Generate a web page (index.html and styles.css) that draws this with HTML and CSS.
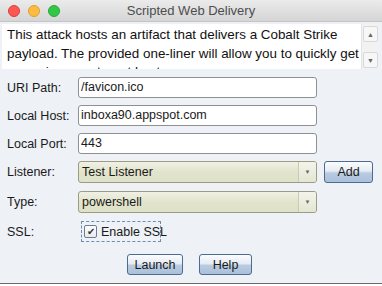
FILE: index.html
```html
<!DOCTYPE html>
<html lang="en">
<head>
  <meta charset="UTF-8">
  <title>Scripted Web Delivery</title>
  <link rel="stylesheet" href="styles.css">
</head>
<body>
  <div class="window">
    <div class="titlebar">
      <div class="lights">
        <span class="light red"></span>
        <span class="light yellow"></span>
        <span class="light green"></span>
      </div>
      <div class="title">Scripted Web Delivery</div>
    </div>
    <div class="desc">
      <p>This attack hosts an artifact that delivers a Cobalt Strike payload. The provided one-liner will allow you to quickly get a session on a target host.</p>
      <div class="scrollbar">
        <span class="arrow up">&#9650;</span>
        <span class="arrow down">&#9660;</span>
      </div>
    </div>
    <div class="form">
      <div class="row">
        <label>URI Path:</label>
        <div class="field">/favicon.ico</div>
      </div>
      <div class="row">
        <label>Local Host:</label>
        <div class="field">inboxa90.appspot.com</div>
      </div>
      <div class="row">
        <label>Local Port:</label>
        <div class="field">443</div>
      </div>
      <div class="row combo-row">
        <label>Listener:</label>
        <div class="combo">Test Listener<span class="drop">&#9660;</span></div>
        <button class="button add">Add</button>
      </div>
      <div class="row combo-row">
        <label>Type:</label>
        <div class="combo">powershell<span class="drop">&#9660;</span></div>
      </div>
      <div class="row check-row">
        <label>SSL:</label>
        <div class="check"><span class="box">&#10004;</span>Enable SSL</div>
      </div>
    </div>
    <div class="actions">
      <button class="button launch">Launch</button>
      <button class="button help">Help</button>
    </div>
  </div>
</body>
</html>
```

FILE: styles.css
```css
body {
  margin: 0;
  background: #fff;
  font-family: 'Liberation Sans', sans-serif;
  color: #1a1a1a;
}
.window {
  width: 382px;
  height: 284px;
  background: #eef1f6;
  border-bottom: 1px solid #6a6a6a;
  box-sizing: border-box;
  overflow: hidden;
}
.titlebar {
  height: 22px;
  background: linear-gradient(#ebebeb, #d5d5d5);
  border-bottom: 1px solid #c4c4c4;
  box-sizing: border-box;
  display: flex;
  align-items: center;
  position: relative;
}
.lights {
  display: flex;
  gap: 8px;
  padding-left: 8px;
}
.light {
  width: 12px;
  height: 12px;
  border-radius: 50%;
  box-sizing: border-box;
}
.red { background: #fc5753; border: 0.5px solid #df3d3a; }
.yellow { background: #fdbc40; border: 0.5px solid #de9f34; }
.green { background: #33c748; border: 0.5px solid #27aa35; }
.title {
  position: absolute;
  left: 0;
  right: 0;
  text-align: center;
  font-size: 13px;
  color: #4d4d4d;
}
.desc {
  margin: 2px 3px 0 2px;
  height: 45px;
  background: #fff;
  display: flex;
  overflow: hidden;
}
.desc p {
  flex: 1;
  margin: 0;
  padding: 2px 0 0 5px;
  font-size: 13.4px;
  line-height: 18.5px;
  color: #111;
}
.scrollbar {
  width: 17px;
  background: #f2f2f2;
  border-left: 1px solid #e4e4e4;
  display: flex;
  flex-direction: column;
  justify-content: space-between;
  padding: 2px 0 1px;
}
.arrow {
  height: 14px;
  margin: 0 1px;
  border: 1px solid #d8d8d8;
  border-radius: 2px;
  background: #f7f7f7;
  color: #666;
  font-size: 7px;
  display: flex;
  align-items: center;
  justify-content: center;
}
.form {
  padding: 8px 0 0 7px;
}
.row {
  display: flex;
  align-items: center;
  height: 21px;
  margin-bottom: 7px;
}
.row label {
  width: 71px;
  font-size: 12.5px;
}
.field {
  width: 239px;
  height: 21px;
  box-sizing: border-box;
  border: 1px solid #8f9091;
  border-radius: 3px;
  background: #fff;
  font-size: 12.5px;
  line-height: 19px;
  padding-left: 2px;
}
.combo-row {
  height: 22px;
  margin-bottom: 8px;
}
.combo {
  width: 239px;
  height: 22px;
  box-sizing: border-box;
  border: 1px solid #9a9c86;
  border-radius: 3px;
  background: linear-gradient(#f0f1e3, #e1e4cc 50%, #dfe2c8);
  font-size: 12.5px;
  line-height: 20px;
  padding-left: 3px;
  display: flex;
  justify-content: space-between;
}
.drop {
  width: 17px;
  border-left: 1px solid #c9cbb4;
  background: linear-gradient(#f4f4ea, #e4e6d2);
  color: #666;
  font-size: 6px;
  text-align: center;
  border-radius: 0 2px 2px 0;
}
.button {
  height: 22px;
  box-sizing: border-box;
  border: 1px solid #4e6a8f;
  border-radius: 3px;
  background: linear-gradient(#fbfcfd, #e5ecf4 45%, #b9cbe0 55%, #a9c0dc);
  font-family: 'Liberation Sans', sans-serif;
  font-size: 12.5px;
  color: #1a1a1a;
  padding: 0;
}
.add {
  width: 49px;
  margin-left: 7px;
}
.check-row {
  height: 21px;
}
.check {
  margin-left: 3px;
  width: 80px;
  height: 21px;
  box-sizing: border-box;
  border: 1px dashed #6f8bb0;
  display: flex;
  align-items: center;
  font-size: 12.5px;
  white-space: nowrap;
}
.box {
  width: 13px;
  height: 13px;
  box-sizing: border-box;
  border: 1px solid #6e7d90;
  border-radius: 2px;
  background: linear-gradient(#ffffff, #e6e9ee);
  color: #333;
  font-size: 10px;
  line-height: 11px;
  text-align: center;
  margin: 0 4px 0 2px;
  flex: none;
}
.actions {
  display: flex;
  padding: 5px 0 0 127px;
  gap: 16px;
}
.launch { width: 56px; height: 21px; }
.help { width: 53px; height: 21px; }
```
